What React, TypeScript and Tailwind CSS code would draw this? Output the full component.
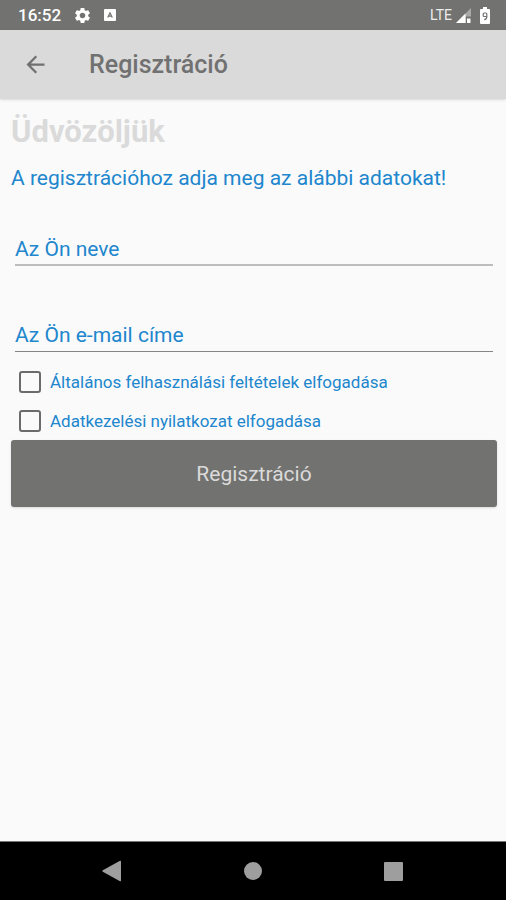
import React, { useState } from "react";
import { MdArrowBack, MdSettings } from "react-icons/md";

const StatusBar = () => (
  <div className="flex h-[30px] items-center justify-between bg-[#727270] pr-4 pl-[18px] text-white">
    <div className="flex items-center">
      <span className="text-[17px] leading-5 font-medium">16:52</span>
      <MdSettings className="ml-3 size-[19px]" />
      <svg viewBox="0 0 12 12" className="ml-3 size-3" aria-hidden="true">
        <rect width="12" height="12" rx="1" fill="#fff" />
        <path d="M3.7 8.500 6 3.800 8.300 8.500M4.500 7.200h3" fill="none" stroke="#727270" strokeWidth="1.200" />
      </svg>
    </div>
    <div className="flex items-center">
      <span className="text-[14px] leading-5 text-[#ececec]">LTE</span>
      <svg viewBox="0 0 15 15" className="ml-1 size-[15px]" aria-hidden="true">
        <path d="M15 0v8.500h-5V15H0z" fill="#a9a9a8" />
        <path d="M9.500 5.500V15H0z" fill="#fff" />
        <path d="M11 10.500h3.500V15H11z" fill="#fff" />
      </svg>
      <svg viewBox="0 0 10 17" className="ml-[9px] h-[17px] w-[10px]" aria-hidden="true">
        <path d="M3 0h4v2h2a1 1 0 0 1 1 1v13a1 1 0 0 1-1 1H1a1 1 0 0 1-1-1V3a1 1 0 0 1 1-1h2z" fill="#fff" />
        <path d="M6.800 10.500V7a1 1 0 0 0-1-1H4.200a1 1 0 0 0-1 1v1.500a1 1 0 0 0 1 1h2.600c0 2-.8 3-2.600 3.200" fill="none" stroke="#727270" strokeWidth="1.200" />
      </svg>
    </div>
  </div>
);

const NavBar = () => (
  <nav className="grid h-[59px] grid-cols-3 items-center border-t border-[#777] bg-black px-[42px]">
    <button type="button" aria-label="Vissza" className="flex justify-center">
      <svg viewBox="0 0 20 22" className="h-[22px] w-5" fill="#9e9e9e">
        <path d="M.8 10.300 18 .8q1-.4 1 .6v19.200q0 1-1 .6L.8 11.700q-1-.7 0-1.400z" />
      </svg>
    </button>
    <button type="button" aria-label="Kezdőképernyő" className="flex justify-center">
      <span className="size-[18px] rounded-full bg-[#9e9e9e]" />
    </button>
    <button type="button" aria-label="Áttekintés" className="flex justify-center">
      <span className="size-[19px] rounded-[1px] bg-[#9e9e9e]" />
    </button>
  </nav>
);

interface CheckFieldProps {
  id: string;
  label: string;
}

const CheckField = ({ id, label }: CheckFieldProps) => {
  const [checked, setChecked] = useState(false);

  return (
    <div className="flex h-[39px] items-center gap-[9px] pl-2">
      <input
        id={id}
        type="checkbox"
        checked={checked}
        onChange={(e) => setChecked(e.target.checked)}
        className="size-[22px] appearance-none rounded-[3px] border-2 border-[#6b6b6b] checked:bg-[#6b6b6b]"
      />
      <label htmlFor={id} className="text-[17px] leading-6 text-[#2086cd]">
        {label}
      </label>
    </div>
  );
};

export default function App() {
  const [name, setName] = useState("");
  const [email, setEmail] = useState("");

  return (
    <div className="flex min-h-screen flex-col bg-[#fafafa] font-['Roboto',sans-serif]">
      <StatusBar />
      <header className="flex h-[69px] items-center bg-[#dadada] pl-[22px] shadow-sm">
        <button type="button" aria-label="Vissza" className="text-[#707070]">
          <MdArrowBack className="size-[27px]" />
        </button>
        <h1 className="ml-10 text-[25px] leading-8 font-medium text-[#717171]">Regisztráció</h1>
      </header>

      <main className="flex-1 pt-[13px] pr-[9px] pl-[11px]">
        <h2 className="text-[31px] leading-10 font-bold text-[#dadada]">Üdvözöljük</h2>
        <p className="mt-3 text-[21px] leading-7 text-[#2086cd]">
          A regisztrációhoz adja meg az alábbi adatokat!
        </p>

        <form onSubmit={(e) => e.preventDefault()}>
          <div className="mt-10 px-1">
            <input
              type="text"
              aria-label="Az Ön neve"
              placeholder="Az Ön neve"
              value={name}
              onChange={(e) => setName(e.target.value)}
              className="block h-[34px] w-full border-b-2 border-[#bdbdbd] pt-[2px] text-[21px] leading-7 text-[#2086cd] outline-none placeholder:text-[#2086cd]"
            />
          </div>
          <div className="mt-[52px] px-1">
            <input
              type="email"
              aria-label="Az Ön e-mail címe"
              placeholder="Az Ön e-mail címe"
              value={email}
              onChange={(e) => setEmail(e.target.value)}
              className="block h-[34px] w-full border-b border-[#858585] text-[21px] leading-7 text-[#2086cd] outline-none placeholder:text-[#2086cd]"
            />
          </div>

          <div className="mt-[10px]">
            <CheckField id="terms" label="Általános felhasználási feltételek elfogadása" />
            <CheckField id="privacy" label="Adatkezelési nyilatkozat elfogadása" />
          </div>

          <button
            type="submit"
            className="h-[67px] w-full rounded-[3px] bg-[#727270] text-[21px] leading-7 text-[#dadada] shadow-sm"
          >
            Regisztráció
          </button>
        </form>
      </main>

      <NavBar />
    </div>
  );
}
